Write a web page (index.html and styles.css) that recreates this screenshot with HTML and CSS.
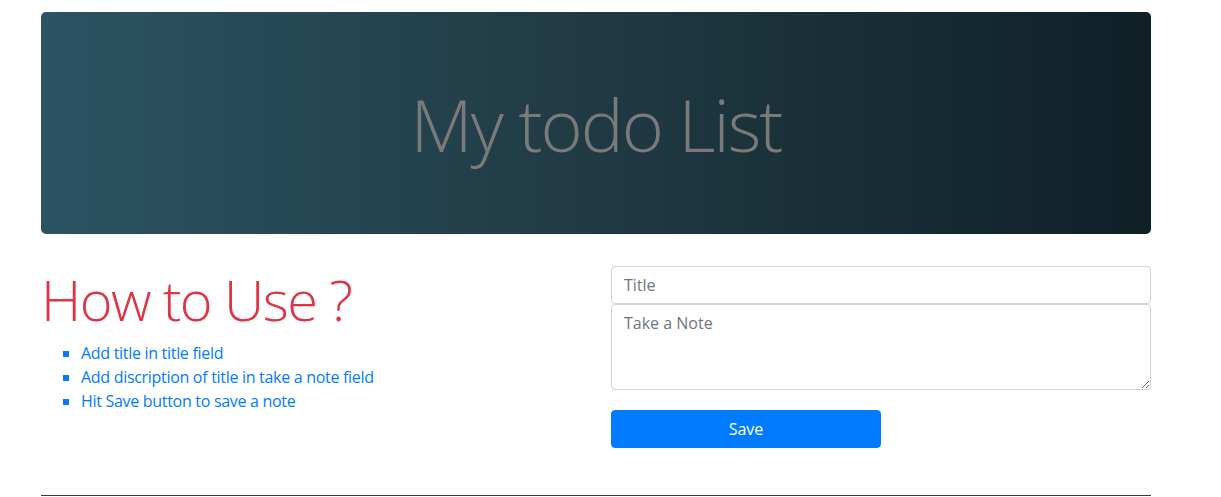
FILE: index.html
```html
<!DOCTYPE html>
<html lang="en">
<head>
<meta charset="utf-8">
<title>My todo List</title>
<link rel="stylesheet" href="styles.css">
</head>
<body>
<div class="container">
  <div class="jumbotron">
    <h1 class="display-3">My todo List</h1>
  </div>
  <div class="row">
    <div class="col">
      <h1 class="display-4">How to Use ?</h1>
      <ul class="steps">
        <li>Add title in title field</li>
        <li>Add discription of title in take a note field</li>
        <li>Hit Save button to save a note</li>
      </ul>
    </div>
    <div class="col">
      <form class="note-form">
        <input class="form-control" type="text" placeholder="Title">
        <textarea class="form-control note-area" rows="3" placeholder="Take a Note"></textarea>
        <button type="button" class="btn-save">Save</button>
      </form>
    </div>
  </div>
  <hr class="divider">
</div>
</body>
</html>
```
FILE: styles.css
```css
* { box-sizing: border-box; }
body {
  margin: 0;
  font-family: "Open Sans", "Noto Sans", sans-serif;
  font-size: 16px;
  line-height: 1.5;
  color: #212529;
  background: #fff;
}
.container {
  width: 1110px;
  margin: 12px 0 0 41px;
}
.jumbotron {
  height: 222px;
  border-radius: 5px;
  background: linear-gradient(to right, #2c5364, #203a43, #0f2027);
  display: flex;
  align-items: center;
  justify-content: center;
  margin-bottom: 32px;
}
.display-3 {
  margin: 0;
  font-size: 72px;
  font-weight: 300;
  line-height: 1.2;
  letter-spacing: -2px;
  color: #7a7a7a;
  padding-top: 2px;
}
.row {
  display: flex;
  gap: 30px;
}
.col {
  width: 540px;
}
.display-4 {
  margin: 0 0 8px;
  font-size: 56px;
  font-weight: 300;
  line-height: 1.2;
  letter-spacing: -1.6px;
  color: #dc3545;
}
.steps {
  margin: 0 0 16px;
  padding-left: 40px;
  list-style: square;
  color: #007bff;
  letter-spacing: -0.3px;
}
.note-form {
  display: flex;
  flex-direction: column;
  align-items: flex-start;
}
.form-control {
  display: block;
  width: 540px;
  height: 38px;
  padding: 6px 12px;
  font-family: inherit;
  font-size: 16px;
  line-height: 1.5;
  color: #495057;
  background: #fff;
  border: 1px solid #ced4da;
  border-radius: 4px;
  margin: 0;
}
.form-control::placeholder { color: #6c757d; opacity: 1; }
.note-area {
  height: 86px;
  resize: vertical;
}
.btn-save {
  margin-top: 20px;
  width: 270px;
  height: 38px;
  border: 1px solid #007bff;
  border-radius: 4px;
  background: #007bff;
  color: #fff;
  font-family: inherit;
  font-size: 16px;
  line-height: 1.5;
}
.divider {
  margin: 47px 0 0;
  border: 0;
  border-top: 1px solid #343a40;
  height: 0;
}
```
